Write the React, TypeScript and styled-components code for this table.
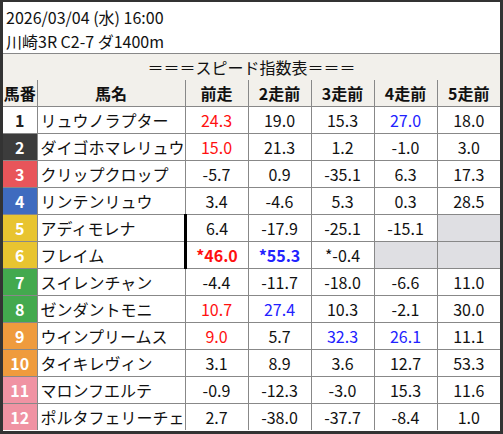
import React from "react";
import styled, { createGlobalStyle, css } from "styled-components";

const GlobalStyle = createGlobalStyle`
  html, body {
    margin: 0;
    padding: 0;
    background: #ffffff;
  }
  body {
    font-family: "Noto Sans CJK JP", "Noto Sans", sans-serif;
    color: #111;
  }
`;

const Frame = styled.div`
  box-sizing: border-box;
  width: 503px;
  height: 434px;
  border: 3px solid #333;
  border-top-width: 2px;
  background: #fff;
  overflow: hidden;
`;

const Info = styled.div`
  padding: 3px 3px 0;
  height: 48px;
  font-size: 16px;
  line-height: 24px;
`;

const TitleBar = styled.div`
  border-top: 1px solid #888;
  background: #f2f0eb;
  height: 26px;
  line-height: 26px;
  text-align: center;
  font-size: 16px;
`;

const Table = styled.table`
  width: 100%;
  border-collapse: collapse;
  border-style: hidden;
  table-layout: fixed;
`;

const Th = styled.th`
  border: 1px solid #888;
  background: #f2f0eb;
  height: 26px;
  padding: 0;
  font-size: 16px;
  font-weight: bold;
  text-align: center;
  white-space: nowrap;
`;

const NumCell = styled.td<{ $bg: string; $fg: string }>`
  border: 1px solid #888;
  height: 26px;
  padding: 0;
  text-align: center;
  font-size: 16px;
  font-weight: bold;
  background: ${(p) => p.$bg};
  color: ${(p) => p.$fg};
`;

const NameCell = styled.td`
  border: 1px solid #888;
  height: 26px;
  padding: 0 0 0 3px;
  font-size: 16px;
  white-space: nowrap;
  overflow: hidden;
`;

const ValCell = styled.td<{ $tone?: string; $bold?: boolean; $empty?: boolean; $mark?: boolean }>`
  border: 1px solid #888;
  height: 26px;
  padding: 0;
  text-align: center;
  font-size: 16px;
  white-space: nowrap;
  color: ${(p) => (p.$tone === "r" ? "#ff1010" : p.$tone === "b" ? "#2222ff" : "#111")};
  font-weight: ${(p) => (p.$bold ? "bold" : "normal")};
  background: ${(p) => (p.$empty ? "#dfdfe3" : "#fff")};
  ${(p) =>
    p.$mark &&
    css`
      border-left: 3px solid #000;
    `}
`;

const frameColors: Record<number, [string, string]> = {
  1: ["#ffffff", "#222"],
  2: ["#3c3c3c", "#fff"],
  3: ["#e8555a", "#fff"],
  4: ["#3f6bbf", "#fff"],
  5: ["#e8c430", "#fff"],
  6: ["#e8c430", "#fff"],
  7: ["#43a94e", "#fff"],
  8: ["#43a94e", "#fff"],
  9: ["#ef9b3d", "#fff"],
  10: ["#ef9b3d", "#fff"],
  11: ["#f093a3", "#fff"],
  12: ["#f093a3", "#fff"],
};

// value format: "text|tone|b" ; null = empty grey cell
const rows: [number, string, (string | null)[]][] = [
  [1, "リュウノラプター", ["24.3|r", "19.0", "15.3", "27.0|b", "18.0"]],
  [2, "ダイゴホマレリュウ", ["15.0|r", "21.3", "1.2", "-1.0", "3.0"]],
  [3, "クリップクロップ", ["-5.7", "0.9", "-35.1", "6.3", "17.3"]],
  [4, "リンテンリュウ", ["3.4", "-4.6", "5.3", "0.3", "28.5"]],
  [5, "アディモレナ", ["6.4", "-17.9", "-25.1", "-15.1", null]],
  [6, "フレイム", ["*46.0|r|b", "*55.3|b|b", "*-0.4", null, null]],
  [7, "スイレンチャン", ["-4.4", "-11.7", "-18.0", "-6.6", "11.0"]],
  [8, "ゼンダントモニ", ["10.7|r", "27.4|b", "10.3", "-2.1", "30.0"]],
  [9, "ウインプリームス", ["9.0|r", "5.7", "32.3|b", "26.1|b", "11.1"]],
  [10, "タイキレヴィン", ["3.1", "8.9", "3.6", "12.7", "53.3"]],
  [11, "マロンフエルテ", ["-0.9", "-12.3", "-3.0", "15.3", "11.6"]],
  [12, "ポルタフェリーチェ", ["2.7", "-38.0", "-37.7", "-8.4", "1.0"]],
];

const heads = ["前走", "2走前", "3走前", "4走前", "5走前"];

export default function App() {
  return (
    <>
      <GlobalStyle />
      <Frame>
        <Info>
          <div>2026/03/04 (水) 16:00</div>
          <div>川崎3R C2-7 ダ1400m</div>
        </Info>
        <TitleBar>＝＝＝スピード指数表＝＝＝</TitleBar>
        <Table>
          <colgroup>
            <col style={{ width: 34 }} />
            <col style={{ width: 148 }} />
            {heads.map((h) => (
              <col key={h} />
            ))}
          </colgroup>
          <thead>
            <tr>
              <Th>馬番</Th>
              <Th>馬名</Th>
              {heads.map((h) => (
                <Th key={h}>{h}</Th>
              ))}
            </tr>
          </thead>
          <tbody>
            {rows.map(([no, name, vals]) => {
              const [bg, fg] = frameColors[no];
              return (
                <tr key={no}>
                  <NumCell $bg={bg} $fg={fg}>
                    {no}
                  </NumCell>
                  <NameCell>{name}</NameCell>
                  {vals.map((v, i) => {
                    const mark = i === 0 && (no === 5 || no === 6);
                    if (v === null) return <ValCell key={i} $empty $mark={mark} />;
                    const [text, tone, bold] = v.split("|");
                    return (
                      <ValCell key={i} $tone={tone} $bold={!!bold} $mark={mark}>
                        {text}
                      </ValCell>
                    );
                  })}
                </tr>
              );
            })}
          </tbody>
        </Table>
      </Frame>
    </>
  );
}
